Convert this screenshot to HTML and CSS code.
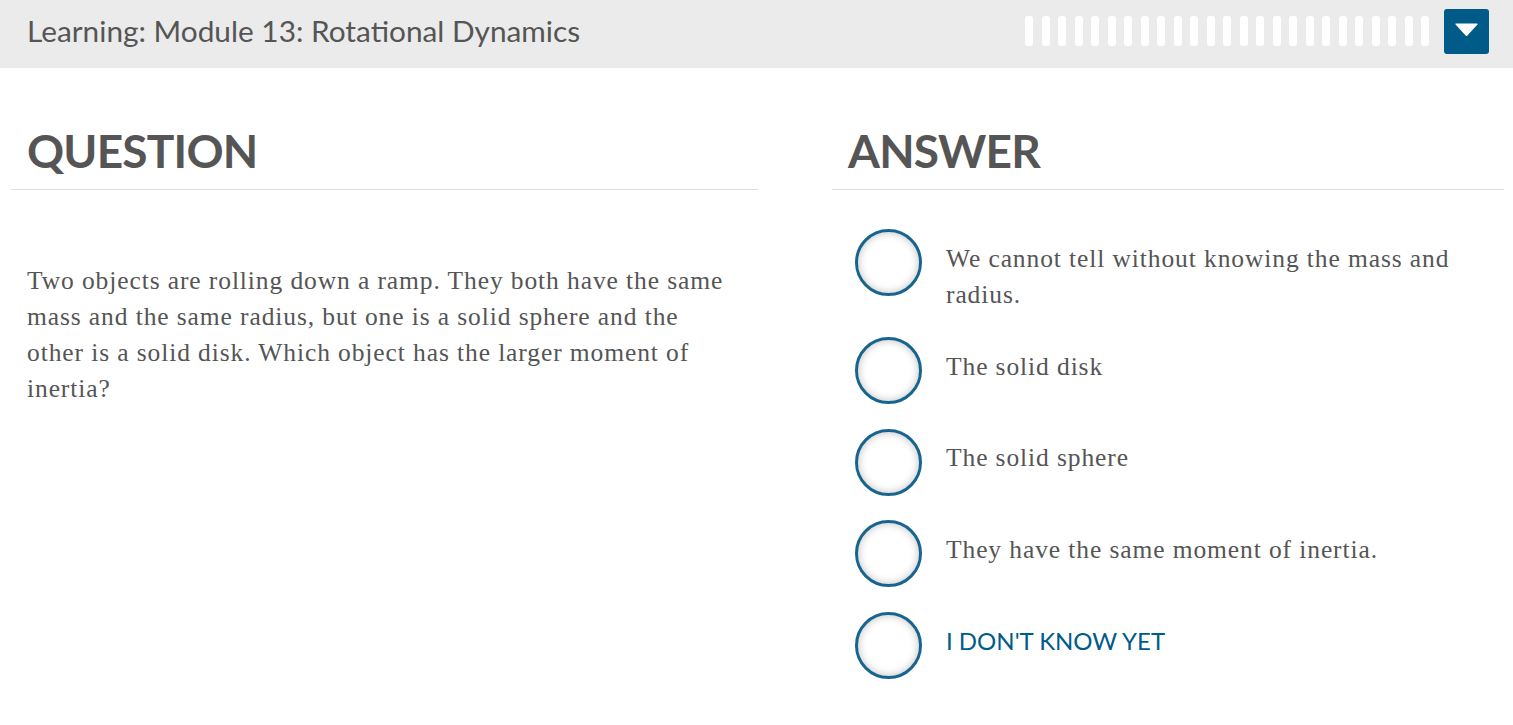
FILE: index.html
```html
<!DOCTYPE html>
<html lang="en">
<head>
<meta charset="utf-8">
<title>Learning: Module 13: Rotational Dynamics</title>
<link rel="stylesheet" href="styles.css">
</head>
<body>
<header class="topbar">
  <h1 class="topbar-title">Learning: Module 13: Rotational Dynamics</h1>
  <div class="topbar-right">
    <div class="progress">
      <span class="tick"></span><span class="tick"></span><span class="tick"></span><span class="tick"></span><span class="tick"></span>
      <span class="tick"></span><span class="tick"></span><span class="tick"></span><span class="tick"></span><span class="tick"></span>
      <span class="tick"></span><span class="tick"></span><span class="tick"></span><span class="tick"></span><span class="tick"></span>
      <span class="tick"></span><span class="tick"></span><span class="tick"></span><span class="tick"></span><span class="tick"></span>
      <span class="tick"></span><span class="tick"></span><span class="tick"></span><span class="tick"></span><span class="tick"></span>
    </div>
    <button class="menu-btn" aria-label="Menu">
      <svg width="23" height="13" viewBox="0 0 23 13"><path d="M1 1 H22 L11.5 12.5 Z" fill="#fff" stroke="#fff" stroke-width="1.2" stroke-linejoin="round"/></svg>
    </button>
  </div>
</header>
<main class="content">
  <section class="col col-question">
    <h2 class="col-heading">QUESTION</h2>
    <p class="question-text">Two objects are rolling down a ramp. They both have the same mass and the same radius, but one is a solid sphere and the other is a solid disk. Which object has the larger moment of inertia?</p>
  </section>
  <section class="col col-answer">
    <h2 class="col-heading">ANSWER</h2>
    <ul class="choices">
      <li class="choice"><span class="radio"></span><span class="choice-text">We cannot tell without knowing the mass and radius.</span></li>
      <li class="choice"><span class="radio"></span><span class="choice-text">The solid disk</span></li>
      <li class="choice"><span class="radio"></span><span class="choice-text">The solid sphere</span></li>
      <li class="choice"><span class="radio"></span><span class="choice-text">They have the same moment of inertia.</span></li>
      <li class="choice"><span class="radio"></span><span class="choice-text choice-idk">I DON'T KNOW YET</span></li>
    </ul>
  </section>
</main>
</body>
</html>
```

FILE: styles.css
```css
* { box-sizing: border-box; }
html, body { margin: 0; padding: 0; background: #fff; }
body { font-family: Lato, "Liberation Sans", sans-serif; color: #555; }

.topbar {
  height: 68px;
  background: #ebebeb;
  display: flex;
  align-items: center;
  justify-content: space-between;
  padding: 0 24px 6px 27px;
}
.topbar-title {
  margin: 0;
  font-family: Lato, sans-serif;
  font-weight: 400;
  font-size: 29.8px;
  line-height: 36px;
  color: #555;
}
.topbar-right {
  display: flex;
  align-items: center;
  gap: 15px;
}
.progress { display: flex; gap: 8.5px; }
.tick {
  width: 8px;
  height: 30px;
  background: #fff;
  border-radius: 3px;
}
.menu-btn {
  width: 45px;
  height: 45px;
  border: 0;
  padding: 0 0 3px;
  background: #005b88;
  border-radius: 3px;
  display: flex;
  align-items: center;
  justify-content: center;
}

.content {
  display: flex;
  padding: 0 9px 0 11px;
  gap: 74px;
}
.col-question { width: 747px; }
.col-answer { flex: 1; }
.col-heading {
  margin: 0;
  padding: 55px 16px 10px;
  font-family: Lato, sans-serif;
  font-weight: 700;
  font-size: 46px;
  line-height: 56px;
  letter-spacing: -0.8px;
  color: #555;
  border-bottom: 1px solid #ddd;
}
.question-text {
  margin: 73px 0 0;
  padding: 0 16px;
  font-family: "Liberation Serif", "DejaVu Serif", serif;
  font-size: 25.5px;
  line-height: 36px;
  letter-spacing: 0.9px;
  color: #555;
}
.choices {
  list-style: none;
  margin: 39px 0 0;
  padding: 0 0 0 23px;
}
.choice {
  display: flex;
  align-items: flex-start;
  gap: 24px;
  margin-bottom: 24.5px;
  min-height: 66px;
}
.radio {
  flex: none;
  width: 67px;
  height: 67px;
  border-radius: 50%;
  border: 3px solid #17658f;
  background: #fff;
  box-shadow: inset 0 0 8px rgba(0,0,0,0.25);
}
.choice-text {
  padding-top: 11.5px;
  font-family: "Liberation Serif", "DejaVu Serif", serif;
  font-size: 25.5px;
  line-height: 36px;
  letter-spacing: 0.9px;
  color: #555;
}
.choice-idk {
  font-family: Lato, sans-serif;
  font-size: 24px;
  letter-spacing: 0;
  color: #005b88;
}
```
